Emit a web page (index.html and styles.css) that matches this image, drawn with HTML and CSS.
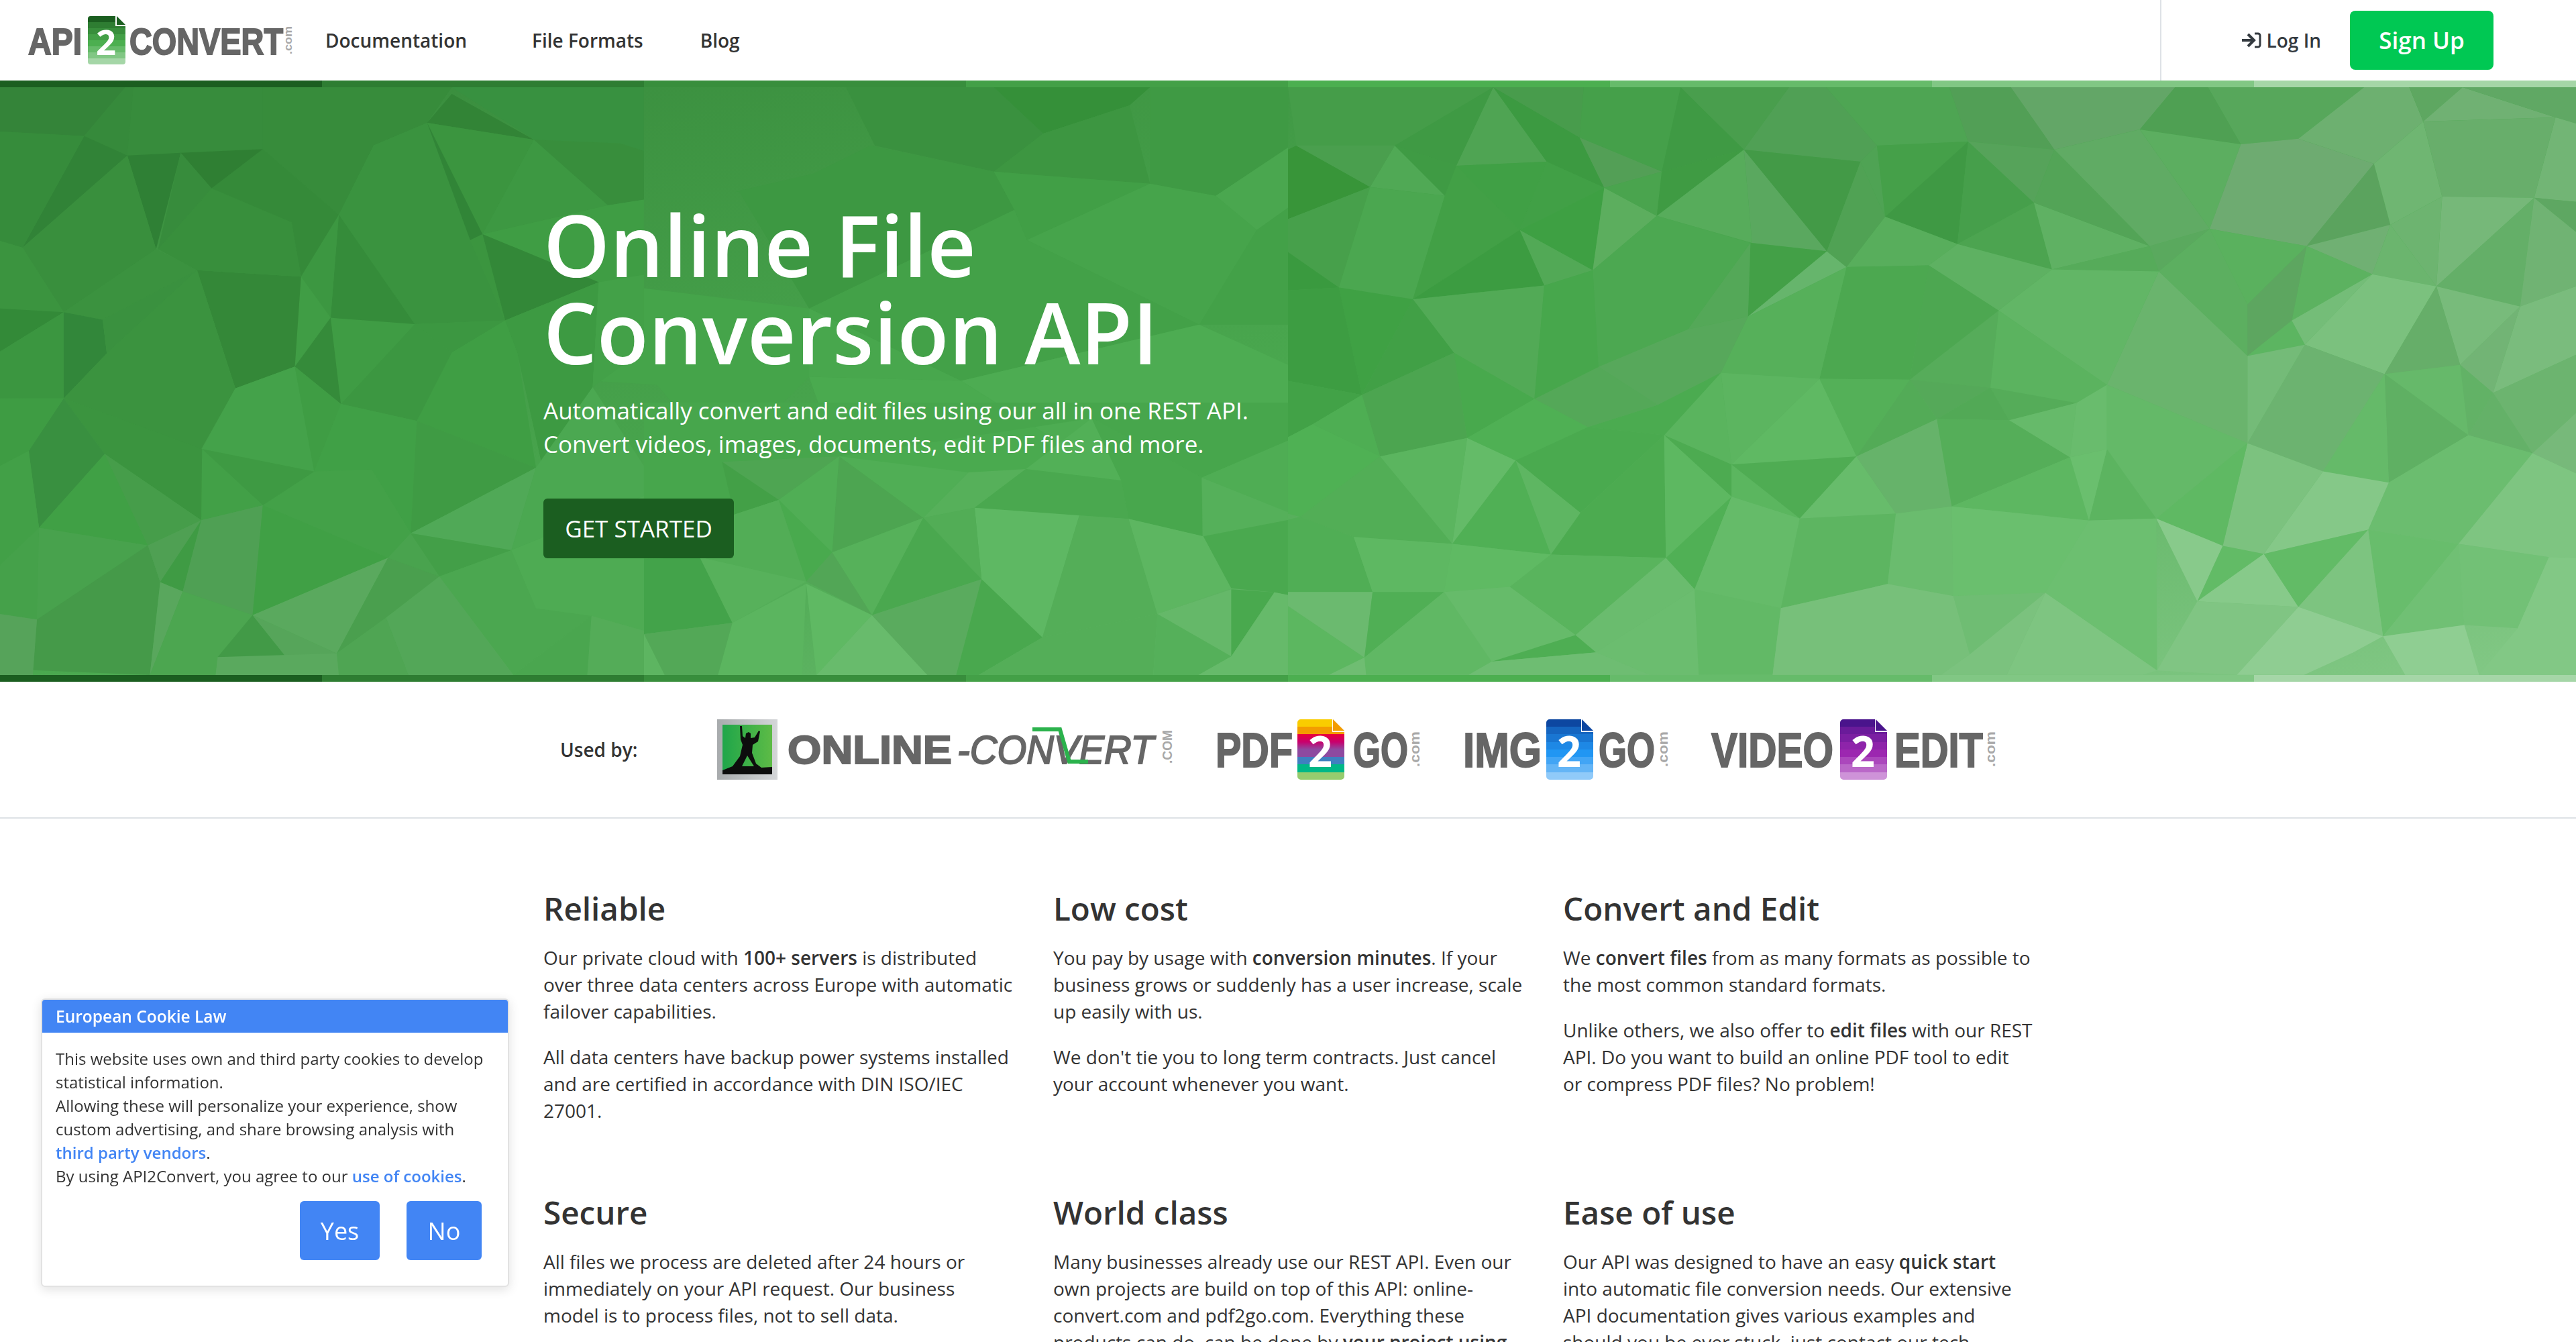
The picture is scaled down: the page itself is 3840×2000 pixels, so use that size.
FILE: index.html
```html
<!DOCTYPE html>
<html lang="en">
<head>
    <meta charset="UTF-8">
    <meta name="viewport" content="width=device-width, initial-scale=1.0">
    <title>API2Convert - Online File Conversion API</title>
    <link rel="stylesheet" href="styles.css">
</head>
<body>
    <!-- Top navigation -->
    <header class="topbar">
        <a class="brand" href="#">
            <svg class="brand-logo" width="400" height="72" viewBox="0 0 400 72">
                <defs>
                    <linearGradient id="bandGreen" x1="0" y1="0" x2="0" y2="1">
                        <stop offset="0" stop-color="#1b5e20"/><stop offset=".125" stop-color="#1b5e20"/>
                        <stop offset=".125" stop-color="#2e7d32"/><stop offset=".25" stop-color="#2e7d32"/>
                        <stop offset=".25" stop-color="#388e3c"/><stop offset=".375" stop-color="#388e3c"/>
                        <stop offset=".375" stop-color="#43a047"/><stop offset=".5" stop-color="#43a047"/>
                        <stop offset=".5" stop-color="#4caf50"/><stop offset=".625" stop-color="#4caf50"/>
                        <stop offset=".625" stop-color="#66bb6a"/><stop offset=".75" stop-color="#66bb6a"/>
                        <stop offset=".75" stop-color="#81c784"/><stop offset=".875" stop-color="#81c784"/>
                        <stop offset=".875" stop-color="#a5d6a7"/><stop offset="1" stop-color="#a5d6a7"/>
                    </linearGradient>
                </defs>
                <text class="logo-word" x="0" y="57" font-size="56" textLength="80" lengthAdjust="spacingAndGlyphs">API</text>
                <path d="M4 0H41V15H56V68a4 4 0 0 1-4 4H4a4 4 0 0 1-4-4V4a4 4 0 0 1 4-4z" transform="translate(89)" fill="url(#bandGreen)"/>
                <polygon points="132,0 145,13 132,13" fill="#1b5e20"/>
                <text class="logo-two" x="101" y="58" font-size="52" textLength="30" lengthAdjust="spacingAndGlyphs">2</text>
                <text class="logo-word" x="151" y="57" font-size="56" textLength="229" lengthAdjust="spacingAndGlyphs">CONVERT</text>
                <text class="logo-com" transform="translate(393,57) rotate(-90)" font-size="17" textLength="42" lengthAdjust="spacingAndGlyphs">.com</text>
            </svg>
        </a>
        <nav class="mainnav">
            <a href="#">Documentation</a>
            <a href="#">File Formats</a>
            <a class="nav-blog" href="#">Blog</a>
        </nav>
        <div class="account">
            <a class="login" href="#">
                <svg width="30" height="26" viewBox="0 0 30 26" fill="none" stroke="#343a40" stroke-width="4">
                    <path d="M1 13H17"/><path d="M10 4l9 9-9 9" stroke-linejoin="miter"/><path d="M20 3h5a3 3 0 0 1 3 3v14a3 3 0 0 1-3 3h-5" stroke-width="3"/>
                </svg>
                Log In
            </a>
            <a class="signup" href="#">Sign Up</a>
        </div>
    </header>

    <!-- Hero with the low poly backdrop -->
    <section class="hero">
        <svg class="hero-bg" viewBox="0 120 3840 896" preserveAspectRatio="none">
            <defs>
                <linearGradient id="heroBase" x1="0" y1="0" x2="1" y2="1">
                    <stop offset="0" stop-color="#37893b"/>
                    <stop offset=".5" stop-color="#4aa84f"/>
                    <stop offset="1" stop-color="#84c987"/>
                </linearGradient>
            </defs>
            <rect x="0" y="120" width="3840" height="896" fill="url(#heroBase)"/>
            <!-- middle, upper part -->
            <g transform="translate(0,100) scale(1.2245,0.5995)">
                <polygon points="1030,50 1210,50 1270,165 1210,260 1065,195" fill="#3a913f"/>
                <polygon points="1210,50 1400,50 1375,95 1270,165" fill="#359039"/>
                <polygon points="1270,165 1375,95 1400,290 1210,260" fill="#3d9641"/>
                <polygon points="1400,50 1568,50 1568,200 1480,320 1400,290" fill="#3f9a44"/>
                <polygon points="895,310 990,265 1060,195 1210,260 1235,355 985,600 900,310" fill="#3d9842"/>
                <polygon points="1210,260 1400,290 1250,430 1235,355" fill="#419f46"/>
                <polygon points="1400,290 1480,320 1530,405 1460,640 1250,430" fill="#46a44b"/>
                <polygon points="1480,320 1568,200 1568,350 1530,405" fill="#4aa74f"/>
                <polygon points="1530,405 1568,350 1568,640 1460,640" fill="#43a148"/>
                <polygon points="985,600 1235,355 1250,430 1460,640 1170,780" fill="#43a148"/>
                <polygon points="725,535 985,600 985,770 880,985 800,790 720,780" fill="#45a44a"/>
                <polygon points="985,600 1170,780 985,770" fill="#48a74d"/>
                <polygon points="1170,780 1460,640 1568,740 1568,1020 1460,1020 1365,1030" fill="#4dac52"/>
                <polygon points="985,770 1170,780 1365,1030 1190,1090 1020,975" fill="#4aaa4f"/>
            </g>
            <!-- left part -->
            <g transform="translate(0,130) scale(0.6122,0.5587)">
                <polygon points="0,0 305,0 205,130 0,118" fill="#348439"/>
                <polygon points="305,0 325,0 310,182 205,130" fill="#368a3b"/>
                <polygon points="325,0 640,0 640,165 440,175 310,182" fill="#378c3c"/>
                <polygon points="640,0 1100,0 1040,95 910,155 825,340 640,165" fill="#378c3b"/>
                <polygon points="1100,18 1300,140 1040,95" fill="#328436"/>
                <polygon points="1100,0 1568,0 1568,170 1510,150 1300,140" fill="#389140"/>
                <polygon points="1300,140 1510,150 1568,170 1568,300 1480,315" fill="#388e3c"/>
                <polygon points="1040,95 1300,140 1175,392" fill="#3b953f"/>
                <polygon points="910,155 1040,95 1145,408 1230,622 1010,632 825,340" fill="#3a933f"/>
                <polygon points="1040,95 1175,392 1145,408" fill="#318537"/>
                <polygon points="1145,408 1175,392 1230,622" fill="#3b953f"/>
                <polygon points="1300,140 1480,315 1175,392" fill="#3d9842"/>
                <polygon points="1480,315 1568,300 1568,500 1458,520 1175,392" fill="#3f9d44"/>
                <polygon points="1175,392 1458,520 1230,622" fill="#338838"/>
                <polygon points="1230,622 1458,520 1443,800 1320,1010 1260,710" fill="#3d9a42"/>
                <polygon points="1458,520 1568,500 1568,700 1443,800" fill="#43a148"/>
                <polygon points="1010,632 1230,622 1100,708" fill="#3c9741"/>
                <polygon points="1100,708 1230,622 1260,710 1305,1015 1015,890" fill="#3f9e44"/>
                <polygon points="1010,632 1100,708 1015,890 830,845" fill="#3c9741"/>
                <polygon points="805,615 1010,632 830,845" fill="#3f9c44"/>
                <polygon points="825,340 1010,632 805,615" fill="#358c3a"/>
                <polygon points="825,340 805,615 733,505" fill="#3c9741"/>
                <polygon points="733,505 805,615 718,745" fill="#409d45"/>
                <polygon points="805,615 830,845 718,745" fill="#358b3a"/>
                <polygon points="480,488 733,505 718,745 573,803" fill="#348838"/>
                <polygon points="515,270 710,360 733,505 480,488 385,432" fill="#388f3c"/>
                <polygon points="515,270 640,165 825,340 733,505 710,360" fill="#358a39"/>
                <polygon points="440,175 640,165 515,270" fill="#2f7f33"/>
                <polygon points="310,182 440,175 380,432" fill="#2f8035"/>
                <polygon points="440,175 515,270 385,432" fill="#378c3c"/>
                <polygon points="205,130 310,182 55,428" fill="#318337"/>
                <polygon points="0,118 205,130 55,428 0,410" fill="#368c3b"/>
                <polygon points="55,428 310,182 380,432 155,600" fill="#398f3d"/>
                <polygon points="155,600 380,432 480,488 250,620" fill="#3b923f"/>
                <polygon points="155,600 250,620 260,710 155,830" fill="#32873a"/>
                <polygon points="250,620 480,488 260,710" fill="#3a913f"/>
                <polygon points="260,710 480,488 573,803 490,965 155,830" fill="#3b933f"/>
                <polygon points="0,410 55,428 155,600 0,590" fill="#3b943f"/>
                <polygon points="0,590 155,600 0,705" fill="#338a38"/>
                <polygon points="0,705 155,600 155,830 0,830" fill="#3b9640"/>
                <polygon points="573,803 718,745 765,1025 492,965" fill="#44a24a"/>
                <polygon points="718,745 830,845 765,1025" fill="#3f9d44"/>
                <polygon points="830,845 1015,890 1000,1190 905,1020 765,1025" fill="#40a046"/>
                <polygon points="1015,890 1305,1015 1000,1190" fill="#3f9b44"/>
                <polygon points="1305,1015 1443,800 1568,1010 1568,1090 1245,1235" fill="#4ba851"/>
                <polygon points="1000,1190 1305,1015 1245,1235" fill="#50a957"/>
                <polygon points="765,1025 905,1020 1000,1190 945,1255 640,1115" fill="#43a148"/>
                <polygon points="492,965 765,1025 640,1115" fill="#3e9a43"/>
                <polygon points="492,965 640,1115 490,1155" fill="#42a047"/>
                <polygon points="155,830 492,965 490,1155 255,978" fill="#3b943f"/>
                <polygon points="70,970 155,830 255,978 95,1175" fill="#399040"/>
                <polygon points="0,830 155,830 70,970 0,1010" fill="#3e9c43"/>
                <polygon points="0,1010 70,970 95,1175 0,1275" fill="#42a047"/>
                <polygon points="95,1175 255,978 360,1222" fill="#40a045"/>
                <polygon points="255,978 490,1155 360,1222" fill="#469d4a"/>
                <polygon points="0,1275 95,1175 90,1420 0,1405" fill="#45a14a"/>
                <polygon points="95,1175 360,1222 90,1420" fill="#48a24d"/>
                <polygon points="90,1420 360,1222 390,1320 365,1568 80,1555" fill="#459a49"/>
                <polygon points="0,1405 90,1420 80,1568 0,1568" fill="#56a35a"/>
                <polygon points="360,1222 490,1155 390,1320" fill="#4fa053"/>
                <polygon points="490,1155 445,1345 390,1320" fill="#3f9b44"/>
                <polygon points="490,1155 640,1115 615,1408 445,1345" fill="#4fa054"/>
                <polygon points="640,1115 945,1255 615,1408" fill="#40a045"/>
                <polygon points="390,1320 445,1345 365,1568" fill="#59a75d"/>
                <polygon points="445,1345 615,1408 530,1520 525,1568 365,1568" fill="#4ca650"/>
                <polygon points="615,1408 695,1518 530,1520" fill="#429a47"/>
                <polygon points="615,1408 820,1510 695,1518" fill="#56a55a"/>
                <polygon points="615,1408 945,1255 820,1510" fill="#5aa95e"/>
                <polygon points="945,1255 1070,1305 940,1415 820,1510" fill="#4a9f4e"/>
                <polygon points="945,1255 1000,1190 1070,1305" fill="#49a34e"/>
                <polygon points="1000,1190 1245,1235 1070,1305" fill="#439f48"/>
                <polygon points="1070,1305 1245,1235 1305,1390 1440,1410 1250,1568" fill="#4ba750"/>
                <polygon points="820,1510 940,1415 995,1568 825,1568" fill="#4fa553"/>
                <polygon points="940,1415 1070,1305 1250,1568 995,1568" fill="#53a758"/>
                <polygon points="530,1520 820,1510 825,1568 525,1568" fill="#5aa95e"/>
                <polygon points="1245,1235 1568,1090 1568,1450 1440,1410 1305,1390" fill="#4eab53"/>
                <polygon points="1440,1410 1568,1450 1568,1568 1430,1568" fill="#54ac58"/>
                <polygon points="1250,1568 1440,1410 1430,1568" fill="#4aa64f"/>
            </g>
            <!-- middle, lower part -->
            <g transform="translate(960,600) scale(0.6122,0.3333)">
                <polygon points="0,0 0,700 135,690 220,500 190,265 475,240 1090,70 1358,335 1568,170 1568,0" fill="#47a64c"/>
                <polygon points="190,265 475,240 328,435" fill="#4ea552"/>
                <polygon points="190,265 328,435 220,500" fill="#43a047"/>
                <polygon points="475,240 680,515 458,670" fill="#4da551"/>
                <polygon points="475,240 458,670 328,435" fill="#50ae55"/>
                <polygon points="475,240 790,312 680,515" fill="#50ae55"/>
                <polygon points="790,312 930,297 805,470 680,515" fill="#56b05a"/>
                <polygon points="930,297 1162,348 1180,520 805,470" fill="#4aa84f"/>
                <polygon points="930,297 1090,70 1162,348" fill="#52b057"/>
                <polygon points="1090,70 1358,335 1360,598 1180,520 1162,348" fill="#48a74d"/>
                <polygon points="1358,335 1568,490 1568,525 1362,598" fill="#55b05a"/>
                <polygon points="1358,335 1568,170 1568,490" fill="#4fad54"/>
                <polygon points="805,470 1060,505 970,1050 822,790" fill="#5eb863"/>
                <polygon points="1060,505 1180,520 1250,945 970,1050" fill="#54ae58"/>
                <polygon points="1180,520 1362,598 1430,830 1250,945" fill="#5db661"/>
                <polygon points="1362,598 1568,525 1568,860 1535,848 1430,830" fill="#4aa94f"/>
                <polygon points="680,515 805,470 822,790" fill="#52ad56"/>
                <polygon points="458,670 680,515 555,950" fill="#56b15a"/>
                <polygon points="680,515 822,790 555,950" fill="#4aa84f"/>
                <polygon points="328,435 458,670 395,800" fill="#49aa4e"/>
                <polygon points="458,670 555,950 395,800" fill="#52a656"/>
                <polygon points="220,500 328,435 395,800 135,690" fill="#52ad56"/>
                <polygon points="135,690 395,800 215,985" fill="#57b15b"/>
                <polygon points="0,700 135,690 215,985 0,1035" fill="#43a34a"/>
                <polygon points="215,985 395,810 385,1218 180,1218" fill="#5bb55f"/>
                <polygon points="395,810 555,950 420,1218" fill="#5fb963"/>
                <polygon points="555,950 690,1218 420,1218" fill="#68bb6c"/>
                <polygon points="555,950 822,790 760,1218 690,1218" fill="#5aab5e"/>
                <polygon points="822,790 970,1050 815,1218 760,1218" fill="#49a84e"/>
                <polygon points="970,1050 1250,945 1240,1218 815,1218" fill="#54ae58"/>
                <polygon points="1250,945 1430,835 1430,1135" fill="#65b869"/>
                <polygon points="1250,945 1430,1135 1350,1218 1240,1218" fill="#55b05a"/>
                <polygon points="1430,835 1535,848 1430,1135" fill="#49a94e"/>
                <polygon points="1535,848 1568,860 1568,1218 1350,1218 1430,1135" fill="#66ba6a"/>
                <polygon points="0,1035 215,985 180,1218 50,1218" fill="#53a857"/>
                <polygon points="0,1035 50,1218 0,1218" fill="#5db561"/>
            </g>
            <!-- right half -->
            <g transform="translate(1920,100) scale(1.2245,0.5995)">
                <polygon points="0,50 250,50 130,195 10,195" fill="#459d49"/>
                <polygon points="250,50 205,245 130,195" fill="#3f9a44"/>
                <polygon points="250,50 315,235 205,245" fill="#4fa453"/>
                <polygon points="250,50 355,175 385,300 315,235" fill="#3c9a41"/>
                <polygon points="250,50 360,50 355,175" fill="#489c4c"/>
                <polygon points="360,50 478,50 455,260 355,175" fill="#45a04a"/>
                <polygon points="355,175 455,260 385,300" fill="#539f56"/>
                <polygon points="478,50 555,205 455,260" fill="#3f9a44"/>
                <polygon points="478,50 610,50 555,205" fill="#499e4d"/>
                <polygon points="610,50 655,50 717,195 697,235 555,205" fill="#50a055"/>
                <polygon points="655,50 805,50 828,185 717,195" fill="#4ea553"/>
                <polygon points="805,50 880,50 933,205 828,185" fill="#529f56"/>
                <polygon points="880,50 1080,50 1037,155 933,205" fill="#63a667"/>
                <polygon points="1080,50 1120,50 1160,192 1037,155" fill="#4fa053"/>
                <polygon points="1120,50 1310,50 1230,178 1160,192" fill="#57a75b"/>
                <polygon points="1310,50 1365,50 1382,135 1322,240 1230,178" fill="#6db070"/>
                <polygon points="1365,50 1430,50 1382,135" fill="#5ea761"/>
                <polygon points="1430,50 1543,125 1382,135" fill="#70b173"/>
                <polygon points="1430,50 1568,50 1568,140 1543,125" fill="#60a864"/>
                <polygon points="1543,125 1568,140 1568,335 1517,325" fill="#72b575"/>
                <polygon points="0,205 10,195 100,298 0,378" fill="#389539"/>
                <polygon points="10,195 130,195 100,298" fill="#4a9f4e"/>
                <polygon points="100,298 130,195 191,320" fill="#50a955"/>
                <polygon points="130,195 205,245 191,320" fill="#3f9b44"/>
                <polygon points="0,378 100,298 62,548 0,460" fill="#47a04b"/>
                <polygon points="0,460 62,548 0,555" fill="#3a9a3f"/>
                <polygon points="100,298 191,320 152,577 62,548" fill="#4ba750"/>
                <polygon points="191,320 205,245 282,405 152,577" fill="#42a046"/>
                <polygon points="205,245 315,235 282,405" fill="#40a045"/>
                <polygon points="315,235 385,300 282,405" fill="#41a046"/>
                <polygon points="282,405 385,300 371,505" fill="#3ea043"/>
                <polygon points="282,405 371,505 312,543" fill="#52a956"/>
                <polygon points="282,405 312,543 152,577" fill="#3c9c41"/>
                <polygon points="385,300 449,370 371,505" fill="#5cae5e"/>
                <polygon points="385,300 455,260 449,370" fill="#4aa44e"/>
                <polygon points="455,260 555,205 449,370" fill="#3f9b43"/>
                <polygon points="449,370 555,205 565,437" fill="#57ac5b"/>
                <polygon points="555,205 565,437 656,458" fill="#5aa85f"/>
                <polygon points="555,205 697,235 656,458" fill="#439a47"/>
                <polygon points="371,505 449,370 563,437 487,652 378,745" fill="#4ca851"/>
                <polygon points="563,437 656,458 560,620" fill="#43a047"/>
                <polygon points="487,652 563,437 560,620" fill="#54a858"/>
                <polygon points="656,458 680,497 560,620" fill="#66b56c"/>
                <polygon points="697,235 727,372 680,497 656,458" fill="#50a254"/>
                <polygon points="697,235 717,195 727,372" fill="#4fa354"/>
                <polygon points="717,195 828,185 727,372" fill="#45a049"/>
                <polygon points="828,185 815,440 727,372" fill="#3f9944"/>
                <polygon points="828,185 908,337 815,440" fill="#469f4b"/>
                <polygon points="828,185 933,205 908,337" fill="#56a35a"/>
                <polygon points="727,372 815,440 780,493 680,497" fill="#58ae5c"/>
                <polygon points="815,440 908,337 930,503" fill="#4ca450"/>
                <polygon points="815,440 930,503 865,605 780,493" fill="#5eb162"/>
                <polygon points="908,337 1049,445 930,503" fill="#5fb163"/>
                <polygon points="930,503 1049,445 1060,508" fill="#56ab5a"/>
                <polygon points="1049,445 1122,402 1060,508" fill="#5aa95e"/>
                <polygon points="908,337 933,205 1049,445" fill="#53a457"/>
                <polygon points="933,205 1037,155 1122,402 1049,445" fill="#60ab64"/>
                <polygon points="1037,155 1160,192 1122,402" fill="#5cae60"/>
                <polygon points="1160,192 1230,178 1322,240 1240,445 1122,402" fill="#6eab71"/>
                <polygon points="1322,240 1342,392 1240,445" fill="#5ba35e"/>
                <polygon points="1322,240 1382,135 1405,322 1342,392" fill="#6fb672"/>
                <polygon points="1382,135 1543,125 1517,325 1405,322" fill="#68ae6b"/>
                <polygon points="1405,322 1517,325 1398,545" fill="#76b879"/>
                <polygon points="1342,392 1405,322 1398,545" fill="#6db470"/>
                <polygon points="1240,445 1342,392 1320,515" fill="#70b073"/>
                <polygon points="1320,515 1342,392 1398,545" fill="#6bb56e"/>
                <polygon points="1398,545 1517,325 1500,595" fill="#64af68"/>
                <polygon points="1517,325 1568,335 1568,410" fill="#5ea762"/>
                <polygon points="1517,325 1568,410 1568,545 1500,595" fill="#70b373"/>
                <polygon points="1122,402 1240,445 1168,590" fill="#5ab15e"/>
                <polygon points="1060,508 1122,402 1168,590 1168,718" fill="#5caf60"/>
                <polygon points="1240,445 1320,515 1222,630" fill="#5cb260"/>
                <polygon points="1168,590 1240,445 1222,630 1168,718" fill="#5da660"/>
                <polygon points="1222,630 1238,690 1168,718" fill="#5cb561"/>
                <polygon points="1222,630 1320,515 1238,690" fill="#74bd78"/>
                <polygon points="1320,515 1398,545 1335,763 1238,690" fill="#7bc17e"/>
                <polygon points="1398,545 1500,595 1427,740" fill="#78bb7b"/>
                <polygon points="1398,545 1427,740 1335,763" fill="#66ae69"/>
                <polygon points="1500,595 1568,545 1568,715 1467,810" fill="#7abc7d"/>
                <polygon points="1500,595 1467,810 1427,740" fill="#72b475"/>
                <polygon points="1335,763 1427,740 1437,915" fill="#66b96a"/>
                <polygon points="1427,740 1467,810 1437,915" fill="#62b266"/>
                <polygon points="1467,810 1568,715 1568,860 1515,960" fill="#6cb46f"/>
                <polygon points="1467,810 1515,960 1437,915" fill="#64b168"/>
                <polygon points="1515,960 1568,860 1568,1010" fill="#77b97a"/>
                <polygon points="1238,690 1335,763 1260,1005 1168,935" fill="#6cb370"/>
                <polygon points="1168,718 1238,690 1168,935" fill="#74bb78"/>
                <polygon points="1335,763 1437,915 1340,1033" fill="#5fb063"/>
                <polygon points="1335,763 1340,1033 1260,1005" fill="#65ba69"/>
                <polygon points="1437,915 1515,960 1425,1185 1315,1150 1340,1033" fill="#6bbd6f"/>
                <polygon points="1515,960 1568,1010 1568,1220 1535,1218 1425,1185" fill="#7ec581"/>
                <polygon points="1260,1005 1340,1033 1315,1150 1188,1210" fill="#85c888"/>
                <polygon points="1168,935 1260,1005 1188,1210 1138,1190" fill="#7cc27f"/>
                <polygon points="1060,508 1168,718 1168,935 997,790" fill="#6ab46d"/>
                <polygon points="930,503 1060,508 997,790 865,605" fill="#62b666"/>
                <polygon points="865,605 997,790 960,835 855,797" fill="#5bb35f"/>
                <polygon points="757,777 865,605 855,797" fill="#56ac5a"/>
                <polygon points="757,777 855,797 790,875" fill="#55a959"/>
                <polygon points="855,797 960,835 878,878" fill="#55ac59"/>
                <polygon points="790,875 855,797 878,878" fill="#52a956"/>
                <polygon points="680,497 780,493 757,777 647,775" fill="#4ca850"/>
                <polygon points="780,493 865,605 757,777" fill="#4da751"/>
                <polygon points="560,620 680,497 647,775 527,760" fill="#56b05a"/>
                <polygon points="487,652 560,620 527,760 450,840 378,745" fill="#57a85b"/>
                <polygon points="647,775 757,777 692,968" fill="#54b058"/>
                <polygon points="757,777 790,875 692,968" fill="#53ab57"/>
                <polygon points="527,760 647,775 540,988" fill="#5cb560"/>
                <polygon points="647,775 692,968 540,988" fill="#5fb963"/>
                <polygon points="458,915 527,760 540,988" fill="#5ab45e"/>
                <polygon points="450,840 527,760 458,915 365,895" fill="#4bab50"/>
                <polygon points="378,745 450,840 365,895 300,825" fill="#54a858"/>
                <polygon points="152,577 312,543 300,825 202,710" fill="#52aa56"/>
                <polygon points="312,543 371,505 378,745 300,825" fill="#47a74c"/>
                <polygon points="62,548 152,577 90,815" fill="#3fa144"/>
                <polygon points="152,577 202,710 90,815" fill="#41a046"/>
                <polygon points="0,555 62,548 90,815 0,780" fill="#3d9d42"/>
                <polygon points="202,710 300,825 218,922" fill="#48a94d"/>
                <polygon points="90,815 202,710 218,922 112,968" fill="#4ca550"/>
                <polygon points="0,780 90,815 30,888 0,920" fill="#42a247"/>
                <polygon points="90,815 112,968 30,888" fill="#4eae53"/>
                <polygon points="218,922 300,825 365,895 277,978" fill="#4fb054"/>
                <polygon points="277,978 365,895 458,915 356,1108" fill="#4aaa4f"/>
                <polygon points="218,922 277,978 200,1185" fill="#64bb68"/>
                <polygon points="112,968 218,922 200,1185" fill="#5bb55f"/>
                <polygon points="0,920 30,888 112,968 15,1118 0,1110" fill="#4fb154"/>
                <polygon points="112,968 200,1185 80,1168 15,1118" fill="#52ae56"/>
                <polygon points="277,978 356,1108 320,1212" fill="#5eb662"/>
                <polygon points="200,1185 277,978 320,1212" fill="#50b055"/>
                <polygon points="356,1108 458,915 460,1220 320,1212" fill="#4cab50"/>
                <polygon points="458,915 540,988 540,1068" fill="#4dab51"/>
                <polygon points="458,915 540,1068 460,1220" fill="#5db861"/>
                <polygon points="540,988 623,1122 540,1068" fill="#5bb65f"/>
                <polygon points="540,988 692,968 623,1122" fill="#4fac53"/>
                <polygon points="692,968 740,1110 623,1122" fill="#67bc6b"/>
                <polygon points="692,968 790,875 808,1092 740,1110" fill="#66b36a"/>
                <polygon points="790,875 878,878 952,970 808,1092" fill="#55ae59"/>
                <polygon points="878,878 960,835 952,970" fill="#66ba6a"/>
                <polygon points="960,835 997,790 997,950 952,970" fill="#69bc6d"/>
                <polygon points="997,790 1168,935 1057,1122 997,950" fill="#64b968"/>
                <polygon points="997,950 1057,1122 975,1127" fill="#5cb460"/>
                <polygon points="952,970 997,950 975,1127" fill="#6abf6e"/>
                <polygon points="808,1092 952,970 975,1127" fill="#5db761"/>
                <polygon points="1057,1122 1168,935 1138,1190" fill="#5fb963"/>
                <polygon points="0,1125 15,1118 80,1168 103,1305 0,1305" fill="#50ae55"/>
                <polygon points="80,1168 200,1185 190,1305 103,1305" fill="#5eb862"/>
                <polygon points="200,1185 320,1212 270,1292 190,1305" fill="#5fba63"/>
                <polygon points="320,1212 460,1220 350,1412 270,1292" fill="#59b45d"/>
                <polygon points="460,1220 540,1068 495,1298" fill="#50b055"/>
                <polygon points="460,1220 495,1298 375,1455 350,1412" fill="#6abc6e"/>
                <polygon points="540,1068 623,1122 600,1345 495,1298" fill="#65bb69"/>
                <polygon points="623,1122 740,1110 730,1285 600,1345" fill="#5db561"/>
                <polygon points="740,1110 808,1092 810,1315 730,1285" fill="#6abc6e"/>
                <polygon points="808,1092 975,1127 922,1307 810,1315" fill="#6abf6e"/>
                <polygon points="975,1127 1057,1122 1058,1500 922,1307" fill="#6cbf70"/>
                <polygon points="1057,1122 1138,1190 1107,1328" fill="#88ca8b"/>
                <polygon points="1138,1190 1188,1210 1107,1328" fill="#62bb66"/>
                <polygon points="1188,1210 1230,1342 1107,1328" fill="#87ca8a"/>
                <polygon points="1188,1210 1315,1150 1230,1342" fill="#62bb66"/>
                <polygon points="1315,1150 1425,1185 1333,1415" fill="#68bd6c"/>
                <polygon points="1230,1342 1315,1150 1333,1415" fill="#7dc480"/>
                <polygon points="1425,1185 1535,1218 1497,1395 1432,1387" fill="#72c176"/>
                <polygon points="1425,1185 1432,1387 1333,1415" fill="#70c074"/>
                <polygon points="1535,1218 1568,1220 1568,1511 1450,1511 1497,1395" fill="#82c885"/>
                <polygon points="1333,1415 1432,1387 1450,1511 1360,1511" fill="#8fce92"/>
                <polygon points="1230,1342 1333,1415 1297,1455 1237,1511 1155,1511" fill="#8fcd92"/>
                <polygon points="1107,1328 1230,1342 1155,1511 1058,1500" fill="#80c583"/>
                <polygon points="0,1305 103,1305 93,1468 0,1340" fill="#6bba6f"/>
                <polygon points="103,1305 190,1305 93,1468" fill="#50af55"/>
                <polygon points="190,1305 270,1292 350,1412 248,1478" fill="#66bb6a"/>
                <polygon points="93,1468 190,1305 248,1478 220,1511 95,1511" fill="#60b864"/>
                <polygon points="248,1478 350,1412 375,1455" fill="#4eae53"/>
                <polygon points="375,1455 495,1298 500,1511 440,1511" fill="#6bbd6f"/>
                <polygon points="495,1298 600,1345 590,1511 500,1511" fill="#62b966"/>
                <polygon points="600,1345 730,1285 810,1315 830,1460 795,1511 590,1511" fill="#77c07a"/>
                <polygon points="810,1315 922,1307 830,1460" fill="#6fbd73"/>
                <polygon points="922,1307 1058,1500 1040,1511 875,1511" fill="#7ec581"/>
                <polygon points="830,1460 922,1307 875,1511 795,1511" fill="#7bc27e"/>
                <polygon points="0,1340 93,1468 50,1511 0,1511" fill="#5cb760"/>
                <polygon points="50,1511 93,1468 95,1511" fill="#6fbd72"/>
                <polygon points="220,1511 248,1478 375,1455 440,1511" fill="#6ebd72"/>
            </g>
        </svg>
        <div class="stripe">
            <span class="s1"></span><span class="s2"></span><span class="s3"></span><span class="s4"></span>
            <span class="s5"></span><span class="s6"></span><span class="s7"></span><span class="s8"></span>
        </div>
        <div class="hero-copy">
            <h1>Online File<br>Conversion API</h1>
            <p>Automatically convert and edit files using our all in one REST API.<br>Convert videos, images, documents, edit PDF files and more.</p>
            <a class="btn-start" href="#">GET STARTED</a>
        </div>
        <div class="stripe">
            <span class="s1"></span><span class="s2"></span><span class="s3"></span><span class="s4"></span>
            <span class="s5"></span><span class="s6"></span><span class="s7"></span><span class="s8"></span>
        </div>
    </section>

    <!-- Used by logos -->
    <section class="usedby">
        <span class="usedby-label">Used by:</span>
        <svg class="partner" width="680" height="90" viewBox="0 0 680 90">
            <defs>
                <linearGradient id="frameGrey" x1="0" y1="0" x2="1" y2="0">
                    <stop offset="0" stop-color="#a8abad"/><stop offset="1" stop-color="#d4d6d8"/>
                </linearGradient>
                <linearGradient id="oneGreen" x1="0" y1="0" x2="1" y2="0">
                    <stop offset="0" stop-color="#1fa64a"/><stop offset="1" stop-color="#5dbb46"/>
                </linearGradient>
            </defs>
            <rect width="90" height="90" fill="url(#frameGrey)"/>
            <rect x="8" y="8" width="74" height="74" fill="url(#oneGreen)"/>
            <path fill-rule="evenodd" fill="#0d0d0d" d="M34 10L37 10 38 25 42 28 43 21 47 19 50 21 50 28 56 27 62 17 64 18 61 33 53 38 52 50 58 66 66 72 82 71 82 82 8 82 8 76 18 72 23 70 34 55 38 38 35 30zM45 54L37 70 55 70z"/>
            <text class="logo-word" x="105" y="66" font-size="59" textLength="245" lengthAdjust="spacingAndGlyphs">ONLINE</text>
            <text class="logo-italic" x="358" y="66" font-size="60" textLength="293" lengthAdjust="spacingAndGlyphs">-CONVERT</text>
            <path d="M470 15H511L525 63H553" fill="none" stroke="#2bb24c" stroke-width="6"/>
            <text class="logo-com" transform="translate(678,66) rotate(-90)" font-size="21" textLength="50" lengthAdjust="spacingAndGlyphs">.COM</text>
        </svg>
        <svg class="partner" width="306" height="90" viewBox="0 0 306 90">
            <defs>
                <linearGradient id="bandRainbow" x1="0" y1="0" x2="0" y2="1">
                    <stop offset="0" stop-color="#f9cc00"/><stop offset=".125" stop-color="#f9cc00"/>
                    <stop offset=".125" stop-color="#f39c00"/><stop offset=".25" stop-color="#f39c00"/>
                    <stop offset=".25" stop-color="#e8003c"/><stop offset=".375" stop-color="#c8006e"/>
                    <stop offset=".375" stop-color="#c8006e"/><stop offset=".5" stop-color="#8e4aa0"/>
                    <stop offset=".5" stop-color="#8e4aa0"/><stop offset=".625" stop-color="#8e4aa0"/>
                    <stop offset=".625" stop-color="#3f80c0"/><stop offset=".75" stop-color="#3f80c0"/>
                    <stop offset=".75" stop-color="#00b887"/><stop offset=".875" stop-color="#00b887"/>
                    <stop offset=".875" stop-color="#96cc6e"/><stop offset="1" stop-color="#96cc6e"/>
                </linearGradient>
            </defs>
            <text class="logo-word" x="0" y="71" font-size="72" textLength="115" lengthAdjust="spacingAndGlyphs">PDF</text>
            <path d="M5 0H52V19H70V85a5 5 0 0 1-5 5H5a5 5 0 0 1-5-5V5a5 5 0 0 1 5-5z" transform="translate(122)" fill="url(#bandRainbow)"/>
            <polygon points="175,0 192,17 175,17" fill="#f39c00"/>
            <text class="logo-two" x="138" y="71" font-size="64" textLength="36" lengthAdjust="spacingAndGlyphs">2</text>
            <text class="logo-word" x="205" y="71" font-size="72" textLength="82" lengthAdjust="spacingAndGlyphs">GO</text>
            <text class="logo-com-light" transform="translate(304,71) rotate(-90)" font-size="21" textLength="53" lengthAdjust="spacingAndGlyphs">.com</text>
        </svg>
        <svg class="partner" width="307" height="90" viewBox="0 0 307 90">
            <defs>
                <linearGradient id="bandBlue" x1="0" y1="0" x2="0" y2="1">
                    <stop offset="0" stop-color="#0d47a1"/><stop offset=".125" stop-color="#0d47a1"/>
                    <stop offset=".125" stop-color="#1565c0"/><stop offset=".25" stop-color="#1565c0"/>
                    <stop offset=".25" stop-color="#1976d2"/><stop offset=".375" stop-color="#1976d2"/>
                    <stop offset=".375" stop-color="#1e88e5"/><stop offset=".5" stop-color="#1e88e5"/>
                    <stop offset=".5" stop-color="#2196f3"/><stop offset=".625" stop-color="#2196f3"/>
                    <stop offset=".625" stop-color="#42a5f5"/><stop offset=".75" stop-color="#42a5f5"/>
                    <stop offset=".75" stop-color="#64b5f6"/><stop offset=".875" stop-color="#64b5f6"/>
                    <stop offset=".875" stop-color="#90caf9"/><stop offset="1" stop-color="#90caf9"/>
                </linearGradient>
            </defs>
            <text class="logo-word" x="0" y="71" font-size="72" textLength="117" lengthAdjust="spacingAndGlyphs">IMG</text>
            <path d="M5 0H52V19H70V85a5 5 0 0 1-5 5H5a5 5 0 0 1-5-5V5a5 5 0 0 1 5-5z" transform="translate(124)" fill="url(#bandBlue)"/>
            <polygon points="177,0 194,17 177,17" fill="#0d47a1"/>
            <text class="logo-two" x="140" y="71" font-size="64" textLength="36" lengthAdjust="spacingAndGlyphs">2</text>
            <text class="logo-word" x="202" y="71" font-size="72" textLength="84" lengthAdjust="spacingAndGlyphs">GO</text>
            <text class="logo-com-light" transform="translate(305,71) rotate(-90)" font-size="21" textLength="53" lengthAdjust="spacingAndGlyphs">.com</text>
        </svg>
        <svg class="partner" width="425" height="90" viewBox="0 0 425 90">
            <defs>
                <linearGradient id="bandPurple" x1="0" y1="0" x2="0" y2="1">
                    <stop offset="0" stop-color="#4a148c"/><stop offset=".125" stop-color="#4a148c"/>
                    <stop offset=".125" stop-color="#6a1b9a"/><stop offset=".25" stop-color="#6a1b9a"/>
                    <stop offset=".25" stop-color="#7b1fa2"/><stop offset=".375" stop-color="#7b1fa2"/>
                    <stop offset=".375" stop-color="#8e24aa"/><stop offset=".5" stop-color="#8e24aa"/>
                    <stop offset=".5" stop-color="#9c27b0"/><stop offset=".625" stop-color="#9c27b0"/>
                    <stop offset=".625" stop-color="#ab47bc"/><stop offset=".75" stop-color="#ab47bc"/>
                    <stop offset=".75" stop-color="#ba68c8"/><stop offset=".875" stop-color="#ba68c8"/>
                    <stop offset=".875" stop-color="#ce93d8"/><stop offset="1" stop-color="#ce93d8"/>
                </linearGradient>
            </defs>
            <text class="logo-word" x="0" y="71" font-size="72" textLength="182" lengthAdjust="spacingAndGlyphs">VIDEO</text>
            <path d="M5 0H52V19H70V85a5 5 0 0 1-5 5H5a5 5 0 0 1-5-5V5a5 5 0 0 1 5-5z" transform="translate(192)" fill="url(#bandPurple)"/>
            <polygon points="245,0 262,17 245,17" fill="#4a148c"/>
            <text class="logo-two" x="208" y="71" font-size="64" textLength="36" lengthAdjust="spacingAndGlyphs">2</text>
            <text class="logo-word" x="273" y="71" font-size="72" textLength="132" lengthAdjust="spacingAndGlyphs">EDIT</text>
            <text class="logo-com-light" transform="translate(423,71) rotate(-90)" font-size="21" textLength="53" lengthAdjust="spacingAndGlyphs">.com</text>
        </svg>
    </section>

    <!-- Feature columns -->
    <main class="features">
        <article>
            <h3>Reliable</h3>
            <p>Our private cloud with <b>100+ servers</b> is distributed over three data centers across Europe with automatic failover capabilities.</p>
            <p>All data centers have backup power systems installed and are certified in accordance with DIN ISO/IEC 27001.</p>
        </article>
        <article>
            <h3>Low cost</h3>
            <p>You pay by usage with <b>conversion minutes</b>. If your business grows or suddenly has a user increase, scale up easily with us.</p>
            <p>We don't tie you to long term contracts. Just cancel your account whenever you want.</p>
        </article>
        <article>
            <h3>Convert and Edit</h3>
            <p>We <b>convert files</b> from as many formats as possible to the most common standard formats.</p>
            <p>Unlike others, we also offer to <b>edit files</b> with our REST API. Do you want to build an online PDF tool to edit<br>or compress PDF files? No problem!</p>
        </article>
        <article>
            <h3>Secure</h3>
            <p>All files we process are deleted after 24 hours or immediately on your API request. Our business model is to process files, not to sell data.</p>
        </article>
        <article>
            <h3>World class</h3>
            <p>Many businesses already use our REST API. Even our own projects are build on top of this API: online-convert.com and pdf2go.com. Everything these products can do, can be done by <b>your project using</b> our API.</p>
        </article>
        <article>
            <h3>Ease of use</h3>
            <p>Our API was designed to have an easy <b>quick start</b> into automatic file conversion needs. Our extensive API documentation gives various examples and should you be ever stuck, just contact our tech support.</p>
        </article>
    </main>

    <!-- Cookie notice -->
    <aside class="cookie">
        <div class="cookie-head">European Cookie Law</div>
        <div class="cookie-body">
            <p>This website uses own and third party cookies to develop statistical information.<br>
            Allowing these will personalize your experience, show custom advertising, and share browsing analysis with <a href="#">third party vendors</a>.<br>
            By using API2Convert, you agree to our <a href="#">use of cookies</a>.</p>
            <div class="cookie-actions">
                <button class="btn-yes">Yes</button>
                <button class="btn-no">No</button>
            </div>
        </div>
    </aside>
</body>
</html>
```

FILE: styles.css
```css
html, body {
    height: 2000px;
    margin: 0;
    overflow: hidden;
}
body {
    font-family: "Open Sans", sans-serif;
    font-size: 28px;
    line-height: 40px;
    color: #333;
    background: #fff;
}
a {
    text-decoration: none;
    color: inherit;
}

/* top bar */
.topbar {
    display: flex;
    align-items: center;
    height: 120px;
}
.brand {
    display: flex;
    margin-left: 42px;
    width: 443px;
}
.brand-logo, .partner {
    overflow: visible;
}
.logo-word {
    font-family: "Liberation Sans", sans-serif;
    font-weight: 700;
    fill: #666;
    stroke: #666;
    stroke-width: 2px;
}
.logo-italic {
    font-family: "Liberation Sans", sans-serif;
    font-style: italic;
    fill: #666;
    stroke: #666;
    stroke-width: 2px;
}
.logo-two {
    font-family: "Open Sans", sans-serif;
    font-weight: 700;
    fill: #fff;
}
.logo-com, .logo-com-light {
    font-family: "Liberation Sans", sans-serif;
    font-weight: 700;
    fill: #a8a8a8;
}
.mainnav {
    display: flex;
    gap: 97px;
    font-weight: 600;
}
.nav-blog {
    margin-left: -12px;
}
.account {
    display: flex;
    align-items: center;
    margin-left: auto;
    height: 120px;
    padding: 0 123px 0 119px;
    border-left: 2px solid #dee2e6;
}
.login {
    display: flex;
    align-items: center;
    gap: 8px;
    font-weight: 600;
    color: #343a40;
    margin-right: 43px;
}
.signup {
    width: 214px;
    height: 88px;
    border-radius: 8px;
    background: #00c853;
    color: #fff;
    font-size: 35px;
    font-weight: 600;
    line-height: 88px;
    text-align: center;
}

/* hero */
.hero {
    position: relative;
    display: flex;
    flex-direction: column;
    height: 896px;
}
.hero-bg {
    position: absolute;
    top: 0;
    left: 0;
    width: 100%;
    height: 100%;
}
.stripe {
    position: relative;
    display: flex;
    height: 10px;
}
.stripe span {
    flex: 1;
}
.s1 { background: #1b5e20; }
.s2 { background: #2e7d32; }
.s3 { background: #388e3c; }
.s4 { background: #43a047; }
.s5 { background: #4caf50; }
.s6 { background: #66bb6a; }
.s7 { background: #81c784; }
.s8 { background: #a5d6a7; }
.hero-copy {
    position: relative;
    flex: 1;
    padding: 169px 0 0 810px;
    color: #fff;
}
.hero-copy h1 {
    margin: 0 0 28px;
    font-size: 126px;
    font-weight: 600;
    line-height: 130px;
}
.hero-copy p {
    margin: 0 0 56px;
    font-size: 35px;
    line-height: 50px;
}
.btn-start {
    display: block;
    width: 284px;
    height: 89px;
    border-radius: 6px;
    background: #1b5e20;
    font-size: 35px;
    line-height: 89px;
    text-align: center;
}

/* used by */
.usedby {
    display: flex;
    align-items: center;
    height: 202px;
    padding-left: 835px;
    border-bottom: 2px solid #dee2e6;
}
.usedby-label {
    width: 234px;
    font-weight: 600;
}
.partner {
    margin-right: 63px;
}

/* features */
.features {
    display: grid;
    grid-template-columns: repeat(3, 702px);
    column-gap: 58px;
    padding: 104px 0 0 810px;
}
.features article {
    height: 453px;
}
.features h3 {
    margin: 0 0 23px;
    font-size: 47.6px;
    font-weight: 600;
    line-height: 60px;
}
.features p {
    margin: 0 0 28px;
}
.features b {
    font-weight: 600;
}

/* cookie notice */
.cookie {
    position: fixed;
    left: 61px;
    top: 1488px;
    width: 698px;
    height: 430px;
    box-sizing: border-box;
    border: 2px solid #e2e2e2;
    border-radius: 6px;
    background: #fff;
    box-shadow: 0 4px 16px rgba(0, 0, 0, .12);
}
.cookie-head {
    height: 49px;
    padding-left: 20px;
    border-radius: 4px 4px 0 0;
    background: #4285f4;
    color: #fff;
    font-size: 24.5px;
    font-weight: 600;
    line-height: 49px;
}
.cookie-body {
    padding: 21px 20px 0;
    font-size: 24px;
    line-height: 35px;
}
.cookie-body p {
    margin: 0;
}
.cookie-body a {
    color: #4285f4;
    font-weight: 600;
}
.cookie-actions {
    display: flex;
    justify-content: flex-end;
    gap: 40px;
    margin-top: 20px;
    padding-right: 19px;
}
.cookie-actions button {
    height: 88px;
    border: none;
    border-radius: 6px;
    background: #4285f4;
    color: #fff;
    font-family: "Open Sans", sans-serif;
    font-size: 36px;
}
.btn-yes { width: 119px; }
.btn-no { width: 112px; }
```
